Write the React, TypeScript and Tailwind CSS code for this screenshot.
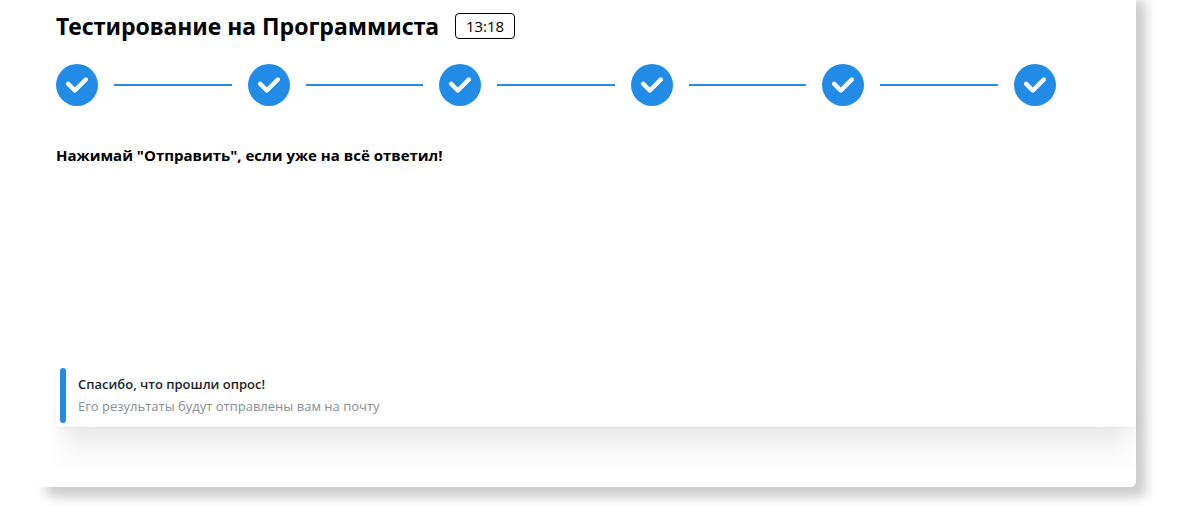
import { Fragment } from "react";

const steps = [1, 2, 3, 4, 5, 6];

function CheckIcon() {
  return (
    <svg viewBox="0 0 10 7" fill="none" className="h-4 w-[22px]" aria-hidden="true">
      <path
        d="M4 4.586L1.707 2.293A1 1 0 1 0 .293 3.707l3 3a.997.997 0 0 0 1.414 0l5-5A1 1 0 1 0 8.293.293L4 4.586z"
        fill="currentColor"
      />
    </svg>
  );
}

function Stepper() {
  return (
    <div className="mr-20 flex items-center">
      {steps.map((step) => (
        <Fragment key={step}>
          {step > 1 && <div className="mx-4 h-0.5 flex-1 bg-[#228be6]" />}
          <button
            type="button"
            aria-label={`Шаг ${step}`}
            className="flex size-[42px] shrink-0 items-center justify-center rounded-full bg-[#228be6] text-white"
          >
            <CheckIcon />
          </button>
        </Fragment>
      ))}
    </div>
  );
}

export default function App() {
  return (
    <div className="overflow-hidden bg-white pr-11 pb-7 pl-9 font-['Open_Sans','Noto_Sans',sans-serif] text-black">
      <main className="-mt-2.5 rounded-[5px] bg-white pt-5 pb-[60px] pl-5 shadow-[10px_10px_12px_rgba(0,0,0,0.2)]">
        <header className="flex items-center gap-4">
          <h1 className="font-['Noto_Sans',sans-serif] text-[23px] leading-8 font-bold">
            Тестирование на Программиста
          </h1>
          <div className="flex h-[26px] w-[60px] items-center justify-center rounded border border-black text-[15px]">
            13:18
          </div>
        </header>
        <div className="mt-[22px]">
          <Stepper />
        </div>
        <h2 className="mt-[39px] text-[15px] leading-5 font-bold">
          Нажимай "Отправить", если уже на всё ответил!
        </h2>
        <section
          role="alert"
          className="mt-[199px] flex gap-3 rounded bg-white p-1 shadow-[0_1px_3px_rgba(0,0,0,0.05),0_36px_28px_-7px_rgba(0,0,0,0.05),0_17px_17px_-7px_rgba(0,0,0,0.04)]"
        >
          <div className="w-1.5 rounded bg-[#228be6]" />
          <div className="py-1.5 text-[13px]">
            <p className="leading-5 font-semibold text-[#212529]">Спасибо, что прошли опрос!</p>
            <p className="mt-0.5 leading-[21px] text-[#868e96]">
              Его результаты будут отправлены вам на почту
            </p>
          </div>
        </section>
      </main>
    </div>
  );
}
